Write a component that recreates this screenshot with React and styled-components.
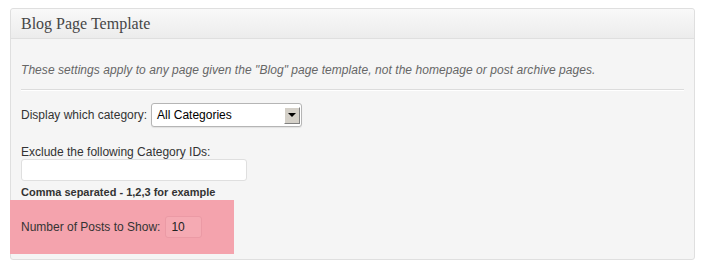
import React from "react";
import styled, { createGlobalStyle } from "styled-components";

const Global = createGlobalStyle`
  body {
    margin: 0;
    background: #ffffff;
    font-family: "Liberation Sans", Arial, sans-serif;
  }
`;

const Panel = styled.section`
  margin: 8px 0 0 10px;
  width: 683px;
  border: 1px solid #dfdfdf;
  border-radius: 3px;
  background: #f5f5f5;
`;

const Header = styled.header`
  height: 29px;
  display: flex;
  align-items: center;
  padding: 0 10px;
  background: linear-gradient(#f9f9f9, #ececec);
  border-bottom: 1px solid #dfdfdf;
  border-radius: 3px 3px 0 0;
`;

const Title = styled.h3`
  margin: 0;
  font-family: "Liberation Serif", Georgia, serif;
  font-weight: normal;
  font-size: 16px;
  color: #464646;
`;

const Body = styled.div`
  padding: 23px 10px 5px 10px;
`;

const Intro = styled.p`
  margin: 0;
  font-size: 12px;
  letter-spacing: 0.06px;
  font-style: italic;
  color: #666;
  line-height: 16px;
  padding-bottom: 11px;
  border-bottom: 1px solid #dcdcdc;
  box-shadow: 0 1px 0 #fff;
`;

const Row = styled.div`
  display: flex;
  align-items: center;
  gap: 4px;
  margin-top: ${(p) => p.$top || 0}px;
  font-size: 12px;
  color: #333;
`;

const Field = styled.div`
  margin-top: ${(p) => p.$top || 0}px;
  display: flex;
  flex-direction: column;
  align-items: flex-start;
  line-height: 14px;
  font-size: 12px;
  color: #333;
`;

const Select = styled.div`
  width: 151px;
  height: 24px;
  box-sizing: border-box;
  border: 1px solid #b5b5b5;
  border-radius: 3px;
  background: #fff;
  display: flex;
  align-items: center;
  justify-content: space-between;
  padding: 0 1px 0 5px;
  font-size: 12px;
  color: #000;
  box-shadow: 0 1px 1px rgba(0, 0, 0, 0.08);
`;

const DropButton = styled.span`
  width: 16px;
  height: 17px;
  box-sizing: border-box;
  background: #d4d0c8;
  border: 1px solid;
  border-color: #fff #808080 #808080 #fff;
  display: flex;
  align-items: center;
  justify-content: center;
  &::after {
    content: "";
    border-left: 4px solid transparent;
    border-right: 4px solid transparent;
    border-top: 4px solid #000;
  }
`;

const TextInput = styled.div`
  width: ${(p) => p.$w}px;
  height: 22px;
  box-sizing: border-box;
  border: 1px solid ${(p) => (p.$hl ? "#eb9aa5" : "#dfdfdf")};
  border-radius: 3px;
  background: ${(p) => (p.$hl ? "#f5aab3" : "#fff")};
  font-size: 12px;
  color: #222;
  display: flex;
  align-items: center;
  padding-left: 5px;
`;

const Hint = styled.div`
  margin-top: 5px;
  line-height: 13px;
  font-size: 11px;
  font-weight: bold;
  color: #333;
`;

const Highlight = styled.div`
  margin: 1px 0 0 -11px;
  width: 224px;
  height: 54px;
  box-sizing: border-box;
  padding-left: 11px;
  background: #f4a3ad;
  display: flex;
  align-items: center;
  gap: 5px;
  font-size: 12px;
  color: #333;
`;

export default function App() {
  return (
    <>
      <Global />
      <Panel>
        <Header>
          <Title>Blog Page Template</Title>
        </Header>
        <Body>
          <Intro>
            These settings apply to any page given the "Blog" page template,
            not the homepage or post archive pages.
          </Intro>
          <Row $top={13}>
            Display which category:
            <Select>
              All Categories
              <DropButton />
            </Select>
          </Row>
          <Field $top={18}>
            Exclude the following Category IDs:
            <TextInput $w={226} />
          </Field>
          <Hint>Comma separated - 1,2,3 for example</Hint>
          <Highlight>
            Number of Posts to Show:
            <TextInput $w={37} $hl>
              10
            </TextInput>
          </Highlight>
        </Body>
      </Panel>
    </>
  );
}
